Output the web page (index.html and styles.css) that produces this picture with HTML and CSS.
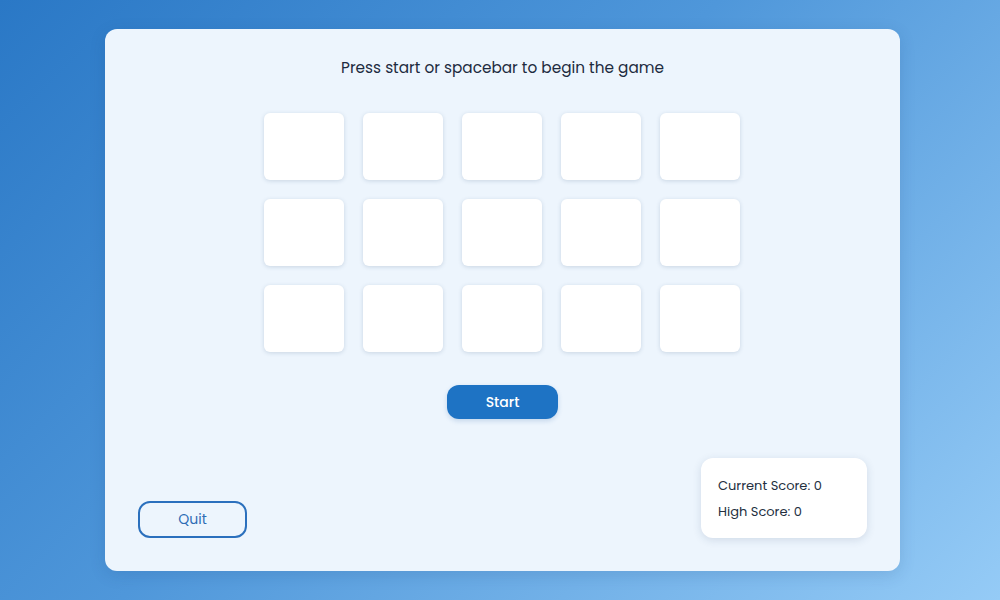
FILE: index.html
```html
<!DOCTYPE html>
<html>
<head>
<meta charset="utf-8">
<link rel="stylesheet" href="styles.css">
</head>
<body>
<div class="panel">
  <p class="title">Press start or spacebar to begin the game</p>
  <div class="grid">
    <div class="card"></div><div class="card"></div><div class="card"></div><div class="card"></div><div class="card"></div>
    <div class="card"></div><div class="card"></div><div class="card"></div><div class="card"></div><div class="card"></div>
    <div class="card"></div><div class="card"></div><div class="card"></div><div class="card"></div><div class="card"></div>
  </div>
  <button class="start">Start</button>
  <div class="bottom">
    <button class="quit">Quit</button>
    <div class="scores">
      <div class="score">Current Score: 0</div>
      <div class="score">High Score: 0</div>
    </div>
  </div>
</div>
</body>
</html>
```
FILE: styles.css
```css
html, body {
  margin: 0;
  height: 100%;
}
body {
  font-family: "Poppins", "Open Sans", "Noto Sans", sans-serif;
  background: linear-gradient(135deg, #2a78c6 0%, #4f97da 45%, #95cbf6 100%);
  display: flex;
  align-items: flex-start;
  box-sizing: border-box;
  padding: 29px 0 0 105px;
}
.panel {
  width: 795px;
  height: 542px;
  box-sizing: border-box;
  background: #edf5fd;
  border-radius: 12px;
  padding: 28px 33px 33px;
  display: flex;
  flex-direction: column;
  align-items: center;
  box-shadow: 0 4px 16px rgba(20, 60, 120, 0.15);
}
.title {
  margin: 0;
  font-size: 15.3px;
  line-height: 22px;
  color: #1d2b40;
}
.grid {
  margin-top: 34px;
  margin-right: 1px;
  display: grid;
  grid-template-columns: repeat(5, 80px);
  grid-auto-rows: 67px;
  column-gap: 19px;
  row-gap: 19px;
}
.card {
  background: #ffffff;
  border-radius: 6px;
  box-shadow: 0 1px 4px rgba(40, 70, 110, 0.18);
}
.start {
  margin-top: 33px;
  width: 111px;
  height: 34px;
  border: none;
  border-radius: 12px;
  background: #1e73c4;
  color: #ffffff;
  font-family: inherit;
  font-size: 14px;
  font-weight: 500;
  cursor: pointer;
  box-shadow: 0 2px 5px rgba(30, 90, 160, 0.2);
}
.bottom {
  margin-top: auto;
  align-self: stretch;
  display: flex;
  justify-content: space-between;
  align-items: flex-end;
}
.quit {
  width: 109px;
  height: 37px;
  background: transparent;
  border: 2px solid #2b70bd;
  border-radius: 12px;
  color: #2e6db5;
  font-family: inherit;
  font-size: 14px;
  cursor: pointer;
}
.scores {
  width: 166px;
  height: 80px;
  box-sizing: border-box;
  background: #ffffff;
  border-radius: 12px;
  padding: 18px 17px 17px;
  box-shadow: 0 2px 8px rgba(40, 70, 110, 0.15);
  display: flex;
  flex-direction: column;
  gap: 6px;
}
.score {
  font-size: 13px;
  line-height: 20px;
  color: #24303f;
}
```
